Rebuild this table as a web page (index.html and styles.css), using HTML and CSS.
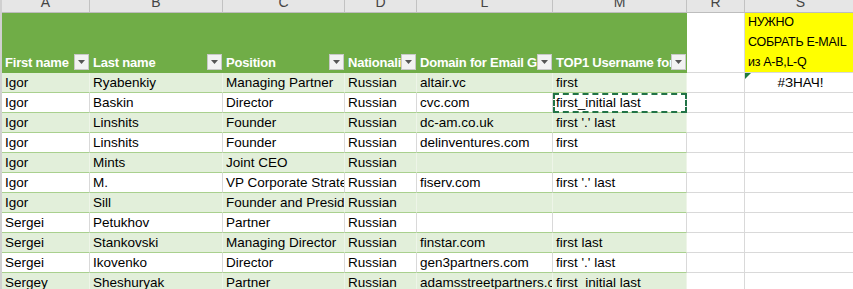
FILE: index.html
```html
<!DOCTYPE html>
<html>
<head>
<meta charset="utf-8">
<link rel="stylesheet" href="styles.css">
</head>
<body>
<div class="sheet">
  <div class="hd">A</div><div class="hd">B</div><div class="hd">C</div><div class="hd">D</div><div class="hd">L</div><div class="hd">M</div><div class="hd">R</div><div class="hd">S</div>

  <div class="th"><span class="tt">First name</span><span class="fb"><svg width="7" height="4" viewBox="0 0 7 4"><path d="M0 0H7L3.5 4Z" fill="#555"/></svg></span></div>
  <div class="th"><span class="tt">Last name</span><span class="fb"><svg width="7" height="4" viewBox="0 0 7 4"><path d="M0 0H7L3.5 4Z" fill="#555"/></svg></span></div>
  <div class="th"><span class="tt">Position</span><span class="fb"><svg width="7" height="4" viewBox="0 0 7 4"><path d="M0 0H7L3.5 4Z" fill="#555"/></svg></span></div>
  <div class="th"><span class="tt">Nationality</span><span class="fb"><svg width="7" height="4" viewBox="0 0 7 4"><path d="M0 0H7L3.5 4Z" fill="#555"/></svg></span></div>
  <div class="th"><span class="tt">Domain for Email Generation</span><span class="fb"><svg width="7" height="4" viewBox="0 0 7 4"><path d="M0 0H7L3.5 4Z" fill="#555"/></svg></span></div>
  <div class="th"><span class="tt">TOP1 Username format</span><span class="fb"><svg width="7" height="4" viewBox="0 0 7 4"><path d="M0 0H7L3.5 4Z" fill="#555"/></svg></span></div>
  <div class="gc tall"></div>
  <div class="note">НУЖНО<br>СОБРАТЬ E-MAIL<br>из A-B,L-Q</div>

  <div class="td b">Igor</div><div class="td b">Ryabenkiy</div><div class="td b">Managing Partner</div><div class="td b">Russian</div><div class="td b">altair.vc</div><div class="td b">first</div><div class="gc"></div><div class="gc err">#ЗНАЧ!</div>
  <div class="td">Igor</div><div class="td">Baskin</div><div class="td">Director</div><div class="td">Russian</div><div class="td">cvc.com</div><div class="td sel">first_initial last</div><div class="gc"></div><div class="gc"></div>
  <div class="td b">Igor</div><div class="td b">Linshits</div><div class="td b">Founder</div><div class="td b">Russian</div><div class="td b">dc-am.co.uk</div><div class="td b">first '.' last</div><div class="gc"></div><div class="gc"></div>
  <div class="td">Igor</div><div class="td">Linshits</div><div class="td">Founder</div><div class="td">Russian</div><div class="td">delinventures.com</div><div class="td">first</div><div class="gc"></div><div class="gc"></div>
  <div class="td b">Igor</div><div class="td b">Mints</div><div class="td b">Joint CEO</div><div class="td b">Russian</div><div class="td b"></div><div class="td b"></div><div class="gc"></div><div class="gc"></div>
  <div class="td">Igor</div><div class="td">M.</div><div class="td">VP Corporate Strategy</div><div class="td">Russian</div><div class="td">fiserv.com</div><div class="td">first '.' last</div><div class="gc"></div><div class="gc"></div>
  <div class="td b">Igor</div><div class="td b">Sill</div><div class="td b">Founder and President</div><div class="td b">Russian</div><div class="td b"></div><div class="td b"></div><div class="gc"></div><div class="gc"></div>
  <div class="td">Sergei</div><div class="td">Petukhov</div><div class="td">Partner</div><div class="td">Russian</div><div class="td"></div><div class="td"></div><div class="gc"></div><div class="gc"></div>
  <div class="td b">Sergei</div><div class="td b">Stankovski</div><div class="td b">Managing Director</div><div class="td b">Russian</div><div class="td b">finstar.com</div><div class="td b">first last</div><div class="gc"></div><div class="gc"></div>
  <div class="td">Sergei</div><div class="td">Ikovenko</div><div class="td">Director</div><div class="td">Russian</div><div class="td">gen3partners.com</div><div class="td">first '.' last</div><div class="gc"></div><div class="gc"></div>
  <div class="td b">Sergey</div><div class="td b">Sheshuryak</div><div class="td b">Partner</div><div class="td b">Russian</div><div class="td b">adamsstreetpartners.com</div><div class="td b">first_initial last</div><div class="gc"></div><div class="gc"></div>
</div>
</body>
</html>
```

FILE: styles.css
```css
html, body {
  margin: 0;
  padding: 0;
  background: #ffffff;
  overflow: hidden;
}
body {
  font-family: "Liberation Sans", Arial, sans-serif;
  font-size: 13.5px;
  color: #000000;
}
.sheet {
  display: grid;
  grid-template-columns: 88px 133px 122px 72px 136px 134px 58px 112px;
  grid-auto-rows: 20px;
  grid-template-rows: 13px 60px;
  border-left: 2px solid #d0d0d0;
  width: max-content;
}
.sheet > div {
  box-sizing: border-box;
  white-space: nowrap;
  overflow: hidden;
}
.hd {
  background: #e6e6e6;
  border-right: 1px solid #c2c2c2;
  border-bottom: 1px solid #bdbdbd;
  text-align: center;
  color: #444444;
  font-size: 14px;
  line-height: 5px;
}
.th {
  background: #70ad47;
  color: #ffffff;
  font-weight: bold;
  font-size: 13px;
  letter-spacing: -0.2px;
  display: flex;
  align-items: flex-end;
  border-bottom: 1px solid #70ad47;
}
.tt {
  flex: 1;
  min-width: 0;
  overflow: hidden;
  white-space: nowrap;
  padding-left: 3px;
  line-height: 19px;
}
.fb {
  flex: none;
  width: 15px;
  height: 16px;
  margin: 0 1px 2px 0;
  box-sizing: border-box;
  background: #f2f2f2;
  border: 1px solid #c8c8c8;
  display: flex;
  align-items: center;
  justify-content: center;
}
.fb svg {
  display: block;
}
.td {
  border-right: 1px solid #d9d9d9;
  border-bottom: 1px solid #a9d08e;
  padding-left: 3px;
  line-height: 19px;
  background: #ffffff;
}
.td.b {
  background: #e2efda;
  border-right-color: #eef5e8;
}
.td.sel {
  outline: 2px dashed #217346;
  outline-offset: -2px;
}
.gc {
  border-right: 1px solid #d9d9d9;
  border-bottom: 1px solid #d9d9d9;
  line-height: 19px;
}
.gc.tall {
  border-bottom: 1px solid #d9d9d9;
}
.note {
  background: #ffff00;
  border-bottom: 1px solid #d9d9d9;
  display: flex;
  flex-direction: column;
  justify-content: flex-end;
  padding-left: 3px;
  font-size: 12.5px;
  letter-spacing: -0.3px;
  line-height: 20px;
}
.err {
  position: relative;
  text-align: center;
}
.err::before {
  content: "";
  position: absolute;
  left: 0;
  top: 0;
  border-top: 6px solid #1f7a3f;
  border-right: 6px solid transparent;
}
```
